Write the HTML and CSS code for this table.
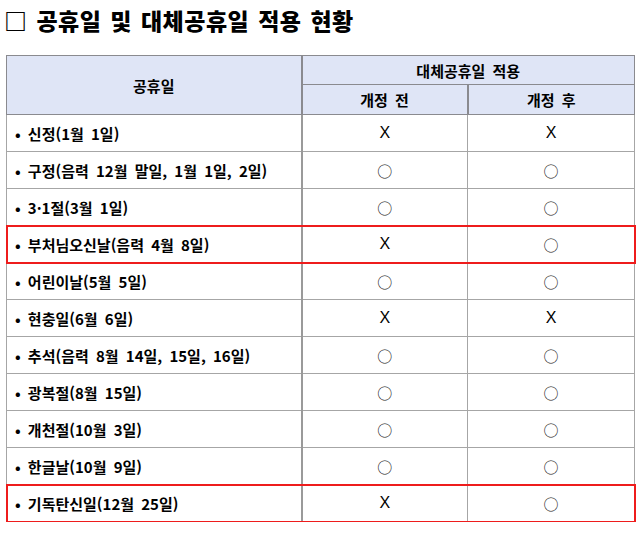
FILE: index.html
```html
<!DOCTYPE html>
<html lang="ko">
<head>
<meta charset="utf-8">
<link rel="stylesheet" href="styles.css">
</head>
<body>
<h1 class="title">□ 공휴일 및 대체공휴일 적용 현황</h1>
<table class="grid">
  <colgroup>
    <col class="c1"><col class="c2"><col class="c3">
  </colgroup>
  <thead>
    <tr class="h1">
      <th rowspan="2">공휴일</th>
      <th colspan="2">대체공휴일 적용</th>
    </tr>
    <tr class="h2">
      <th>개정 전</th>
      <th>개정 후</th>
    </tr>
  </thead>
  <tbody>
    <tr><td class="name">• 신정(1월 1일)</td><td class="mark">X</td><td class="mark">X</td></tr>
    <tr><td class="name">• 구정(음력 12월 말일, 1월 1일, 2일)</td><td class="mark"><span class="o">○</span></td><td class="mark"><span class="o">○</span></td></tr>
    <tr><td class="name">• 3·1절(3월 1일)</td><td class="mark"><span class="o">○</span></td><td class="mark"><span class="o">○</span></td></tr>
    <tr class="hl"><td class="name">• 부처님오신날(음력 4월 8일)</td><td class="mark">X</td><td class="mark"><span class="o">○</span></td></tr>
    <tr><td class="name">• 어린이날(5월 5일)</td><td class="mark"><span class="o">○</span></td><td class="mark"><span class="o">○</span></td></tr>
    <tr><td class="name">• 현충일(6월 6일)</td><td class="mark">X</td><td class="mark">X</td></tr>
    <tr><td class="name">• 추석(음력 8월 14일, 15일, 16일)</td><td class="mark"><span class="o">○</span></td><td class="mark"><span class="o">○</span></td></tr>
    <tr><td class="name">• 광복절(8월 15일)</td><td class="mark"><span class="o">○</span></td><td class="mark"><span class="o">○</span></td></tr>
    <tr><td class="name">• 개천절(10월 3일)</td><td class="mark"><span class="o">○</span></td><td class="mark"><span class="o">○</span></td></tr>
    <tr><td class="name">• 한글날(10월 9일)</td><td class="mark"><span class="o">○</span></td><td class="mark"><span class="o">○</span></td></tr>
    <tr class="hl"><td class="name">• 기독탄신일(12월 25일)</td><td class="mark">X</td><td class="mark"><span class="o">○</span></td></tr>
  </tbody>
</table>
</body>
</html>
```
FILE: styles.css
```css
html, body {
  margin: 0;
  padding: 0;
  background: #ffffff;
}
body {
  font-family: "Noto Sans CJK KR", "Noto Sans", sans-serif;
  color: #000;
}
.title {
  margin: 0;
  padding: 4px 0 0 4px;
  height: 52px;
  box-sizing: border-box;
  font-size: 23px;
  font-weight: 900;
  line-height: 32px;
  letter-spacing: 0.5px;
  word-spacing: 2px;
}
.grid {
  margin-left: 6px;
  margin-top: 3px;
  width: 628px;
  border-collapse: collapse;
  table-layout: fixed;
  font-size: 15px;
  word-spacing: 3px;
}
.c1 { width: 295px; }
.c2 { width: 166px; }
.c3 { width: 167px; }
.grid th {
  background: #dfe5f6;
  font-weight: 700;
  border: 1px solid #8a8a8f;
  padding: 0;
  text-align: center;
}
.h1 th { height: 28px; }
.h2 th { height: 29px; }
.grid td {
  border: 1px solid #a6a6a6;
  height: 36px;
  padding: 0;
}
.grid .name {
  padding-left: 8px;
  font-weight: 700;
  border-right: 2px solid #9a9a9a;
}
.grid .mark {
  text-align: center;
  font-family: "Liberation Sans", sans-serif;
  font-size: 16px;
}
.grid .o {
  font-family: "Noto Sans CJK KR", sans-serif;
  font-size: 15px;
  color: #222;
}
.grid th:first-child {
  border-right: 2px solid #8a8a8f;
}
.hl {
  outline: 2px solid #ee1c1c;
  outline-offset: -1px;
}
```
